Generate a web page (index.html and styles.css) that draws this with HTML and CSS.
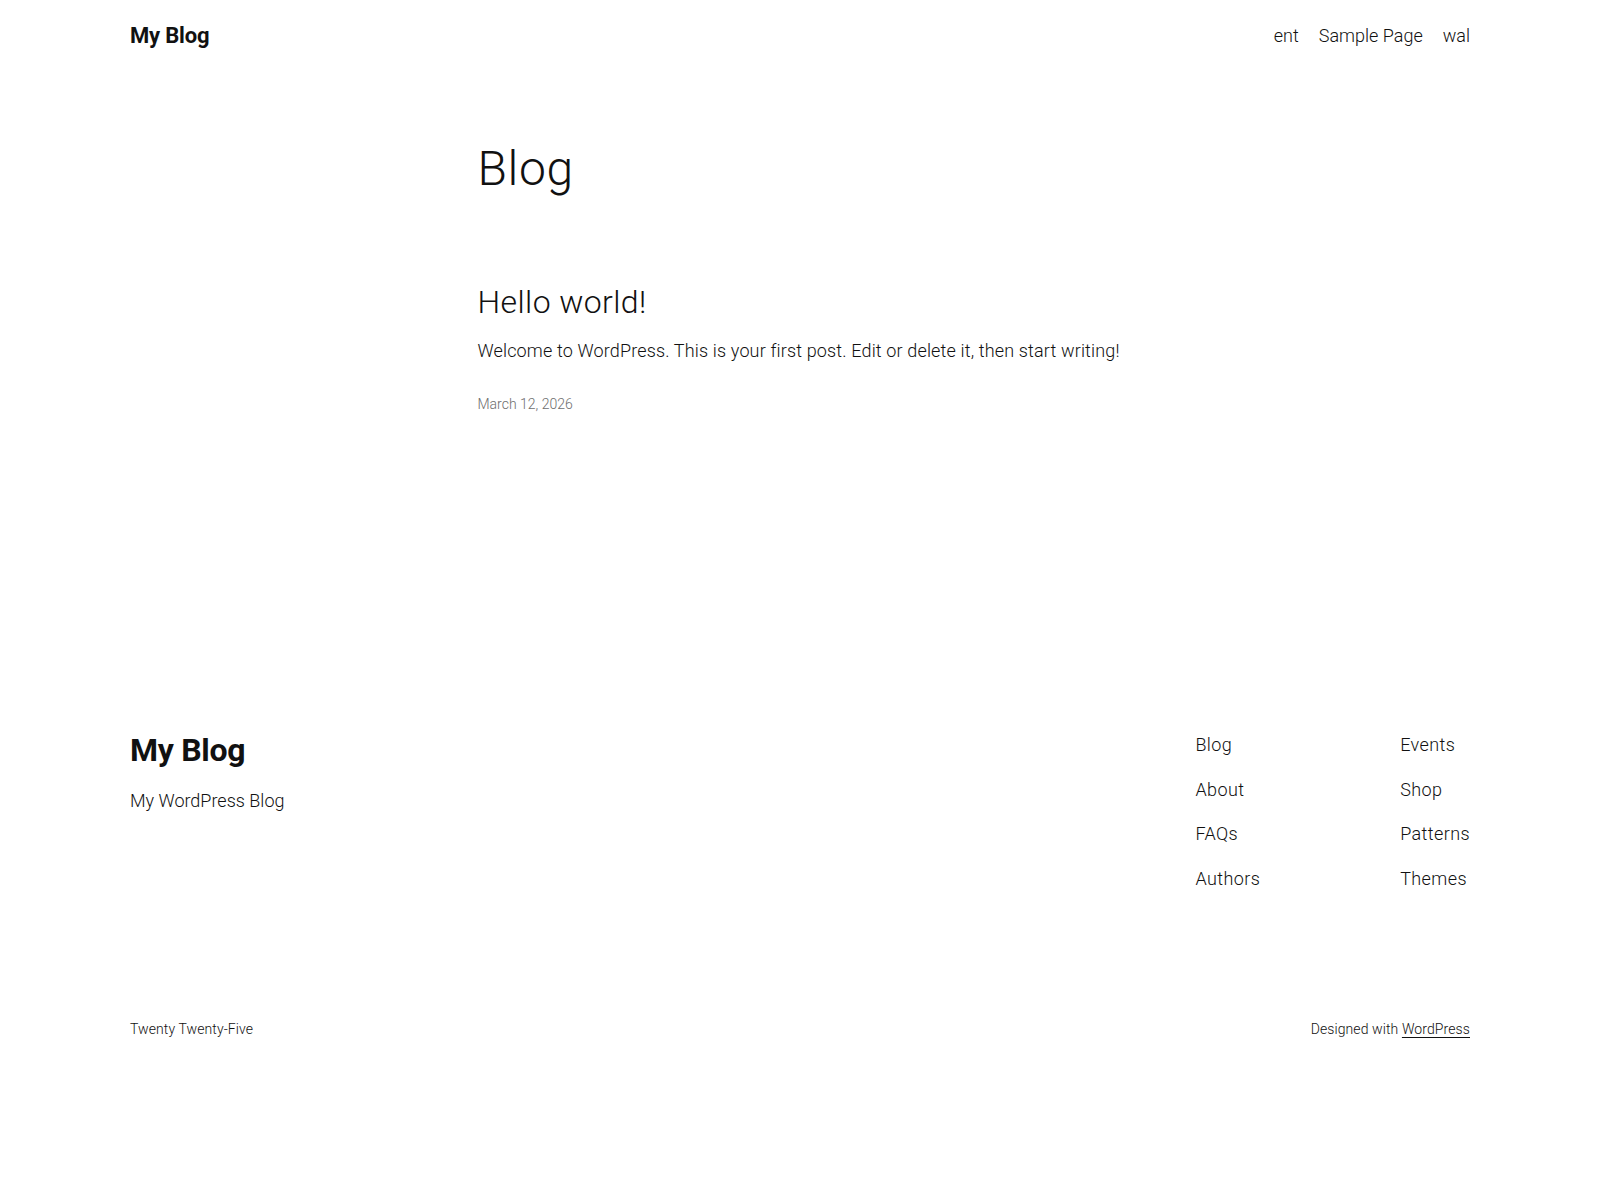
FILE: index.html
```html
<!DOCTYPE html>
<html lang="en">
<head>
<meta charset="utf-8">
<title>My Blog</title>
<link rel="stylesheet" href="styles.css">
</head>
<body>
<header class="site-header">
  <div class="wide header-row">
    <a class="site-title" href="#">My Blog</a>
    <nav class="top-nav">
      <a href="#">ent</a>
      <a href="#">Sample Page</a>
      <a href="#">wal</a>
    </nav>
  </div>
</header>

<main class="site-main">
  <div class="content">
    <h1 class="page-title">Blog</h1>
    <article class="post">
      <h2 class="post-title"><a href="#">Hello world!</a></h2>
      <p class="post-excerpt">Welcome to WordPress. This is your first post. Edit or delete it, then start writing!</p>
      <div class="post-date">March 12, 2026</div>
    </article>
  </div>
</main>

<footer class="site-footer">
  <div class="wide footer-top">
    <div class="footer-brand">
      <a class="footer-title" href="#">My Blog</a>
      <p class="tagline">My WordPress Blog</p>
    </div>
    <div class="footer-navs">
      <nav class="footer-nav">
        <a href="#">Blog</a>
        <a href="#">About</a>
        <a href="#">FAQs</a>
        <a href="#">Authors</a>
      </nav>
      <nav class="footer-nav">
        <a href="#">Events</a>
        <a href="#">Shop</a>
        <a href="#">Patterns</a>
        <a href="#">Themes</a>
      </nav>
    </div>
  </div>
  <div class="wide footer-bottom">
    <span>Twenty Twenty-Five</span>
    <span>Designed with <a class="wp-link" href="#">WordPress</a></span>
  </div>
</footer>
</body>
</html>
```

FILE: styles.css
```css
* { box-sizing: border-box; }

body {
  margin: 0;
  background: #ffffff;
  color: #111111;
  font-family: Roboto, Inter, "Noto Sans", "Liberation Sans", sans-serif;
  font-size: 18px;
  line-height: 1.6;
}

a { color: inherit; text-decoration: none; }

.wide {
  width: 1340px;
  margin: 0 auto;
}

/* Header */
.site-header {
  padding: 21px 0 20px;
}
.header-row {
  display: flex;
  justify-content: space-between;
  align-items: center;
}
.site-title {
  font-size: 22px;
  font-weight: 700;
  line-height: 1.4;
  letter-spacing: -0.2px;
}
.top-nav {
  display: flex;
  gap: 20px;
  font-size: 18px;
  line-height: 1.6;
  font-weight: 300;
}

/* Main */
.site-main {
  padding-top: 68px;
  padding-bottom: 316px;
}
.content {
  width: 645px;
  margin: 0 auto;
}
.page-title {
  margin: 0 0 86px;
  font-size: 48px;
  font-weight: 300;
  line-height: 1.2;
  letter-spacing: 0.6px;
}
.post-title {
  margin: 0 0 15px;
  font-size: 32px;
  font-weight: 300;
  line-height: 1.2;
  letter-spacing: 0.4px;
}
.post-excerpt {
  margin: 0 0 27px;
  font-size: 18px;
  line-height: 1.6;
  font-weight: 300;
  letter-spacing: 0.15px;
}
.post-date {
  font-size: 14px;
  line-height: 1.6;
  color: #6e6e6e;
  font-weight: 300;
}

/* Footer */
.footer-top {
  display: flex;
  justify-content: space-between;
  align-items: flex-start;
}
.footer-title {
  display: block;
  font-size: 32px;
  font-weight: 700;
  line-height: 1.2;
  letter-spacing: -0.3px;
}
.tagline {
  margin: 18px 0 0;
  font-size: 18px;
  line-height: 1.6;
  font-weight: 300;
}
.footer-navs {
  display: flex;
  gap: 140px;
}
.footer-nav {
  display: flex;
  flex-direction: column;
  gap: 15.8px;
  font-size: 18px;
  line-height: 1.6;
  font-weight: 300;
  letter-spacing: 0.4px;
}
.footer-bottom {
  display: flex;
  justify-content: space-between;
  margin-top: 124px;
  padding-bottom: 140px;
  font-size: 14px;
  line-height: 1.6;
  font-weight: 300;
  letter-spacing: 0.1px;
}
.wp-link {
  text-decoration: underline;
  text-underline-offset: 3px;
}
```
